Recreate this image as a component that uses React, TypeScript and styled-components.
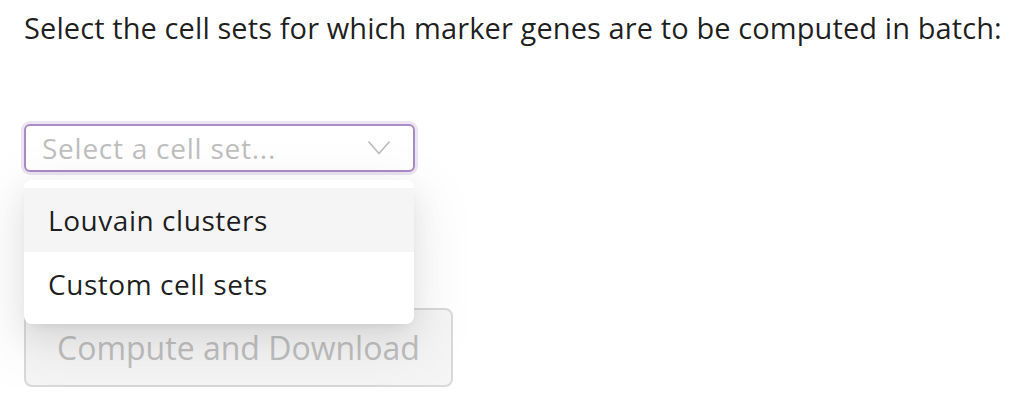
import styled, { createGlobalStyle } from 'styled-components';

const GlobalStyle = createGlobalStyle`
  body {
    margin: 0;
    background: #ffffff;
    font-family: 'Open Sans', 'Noto Sans', sans-serif;
    color: rgba(0, 0, 0, 0.88);
  }
`;

function ChevronDown() {
  return (
    <svg width="24" height="16" viewBox="0 0 24 16" fill="none">
      <polyline points="1.5,1.5 12,13.5 22.5,1.5" stroke="#bfbfbf" strokeWidth="1.8" strokeLinejoin="round" />
    </svg>
  );
}

const options = ['Louvain clusters', 'Custom cell sets'];

function App() {
  return (
    <Page>
      <GlobalStyle />
      <Title>Select the cell sets for which marker genes are to be computed in batch:</Title>
      <SelectWrapper>
        <SelectBox>
          <Placeholder>Select a cell set...</Placeholder>
          <ArrowWrapper>
            <ChevronDown />
          </ArrowWrapper>
        </SelectBox>
        <Dropdown>
          {options.map((label, i) => (
            <Option key={label} $active={i === 0}>
              {label}
            </Option>
          ))}
        </Dropdown>
      </SelectWrapper>
      <ComputeButton disabled>Compute and Download</ComputeButton>
    </Page>
  );
}

export default App;

const Page = styled.div`
  display: flex;
  flex-direction: column;
  align-items: flex-start;
  padding: 8px 0 0 24px;
`;

const Title = styled.p`
  margin: 0;
  font-size: 29px;
  line-height: 40px;
  letter-spacing: 0.1px;
  white-space: nowrap;
  color: rgba(0, 0, 0, 0.88);
`;

const SelectWrapper = styled.div`
  position: relative;
  margin-top: 76px;
  width: 391px;
`;

const SelectBox = styled.div`
  display: flex;
  align-items: center;
  justify-content: space-between;
  box-sizing: border-box;
  height: 48px;
  padding: 0 22px 0 16px;
  border: 2px solid #a98bc6;
  border-radius: 6px;
  box-shadow: 0 0 0 3px #ece4f3;
  background: #ffffff;
`;

const Placeholder = styled.span`
  font-size: 28px;
  line-height: 44px;
  letter-spacing: 0.75px;
  color: #bfbfbf;
`;

const ArrowWrapper = styled.span`
  display: flex;
  align-items: center;
`;

const Dropdown = styled.div`
  position: absolute;
  top: 56px;
  left: 0;
  width: 390px;
  box-sizing: border-box;
  padding: 8px 0;
  border-radius: 8px;
  background: #ffffff;
  box-shadow: 0 12px 32px 0 rgba(0, 0, 0, 0.08), 0 6px 12px -8px rgba(0, 0, 0, 0.12),
    0 18px 56px 16px rgba(0, 0, 0, 0.05);
  z-index: 10;
`;

const Option = styled.div<{ $active: boolean }>`
  display: flex;
  align-items: center;
  height: 64px;
  padding: 0 24px;
  font-size: 28px;
  letter-spacing: 0.55px;
  color: rgba(0, 0, 0, 0.88);
  background: ${({ $active }) => ($active ? '#f5f5f5' : '#ffffff')};
`;

const ComputeButton = styled.button`
  margin-top: 136px;
  height: 79px;
  padding: 0 31px;
  font-family: 'Open Sans', 'Noto Sans', sans-serif;
  font-size: 32px;
  color: #bfbfbf;
  background: #f5f5f5;
  border: 2px solid #d9d9d9;
  border-radius: 8px;
  cursor: not-allowed;
`;
